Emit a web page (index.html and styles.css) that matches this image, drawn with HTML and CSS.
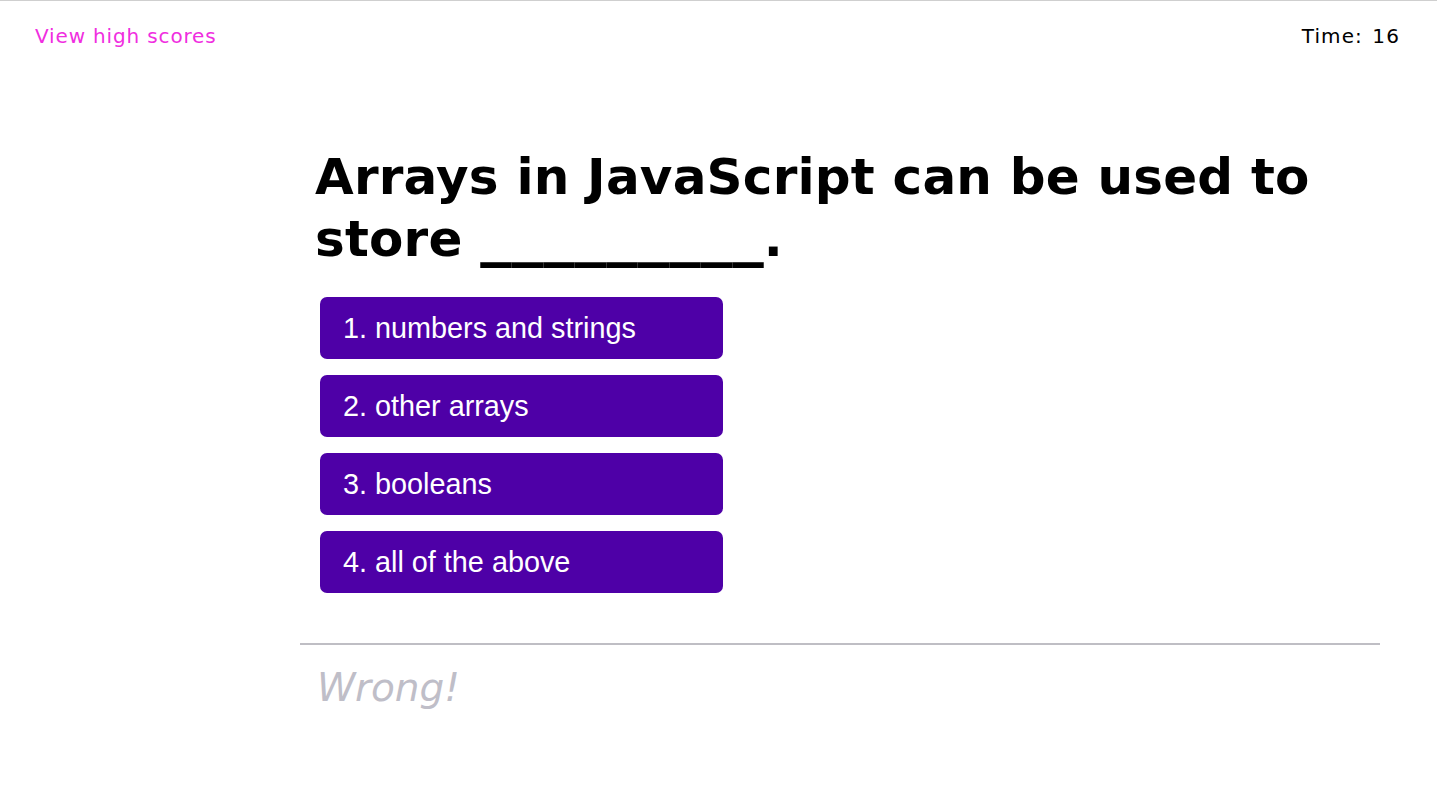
FILE: index.html
```html
<!DOCTYPE html>
<html>
<head>
<meta charset="utf-8">
<link rel="stylesheet" href="styles.css">
</head>
<body>
<header class="topbar">
  <a class="highscores" href="#">View high scores</a>
  <div class="timer">Time: <span>16</span></div>
</header>
<main class="quiz">
  <h1 class="question">Arrays in JavaScript can be used to store <span class="blank">_________</span>.</h1>
  <div class="choices">
    <button class="choice">1. numbers and strings</button>
    <button class="choice">2. other arrays</button>
    <button class="choice">3. booleans</button>
    <button class="choice">4. all of the above</button>
  </div>
  <div class="feedback">
    <p class="result">Wrong!</p>
  </div>
</main>
</body>
</html>
```
FILE: styles.css
```css
html, body {
  margin: 0;
  padding: 0;
  background: #fff;
}
body {
  font-family: Verdana, "DejaVu Sans", sans-serif;
  border-top: 1px solid #cfcfcf;
}
.topbar {
  display: flex;
  justify-content: space-between;
  align-items: baseline;
  padding: 21px 37px 0 35px;
  font-size: 20px;
  line-height: 28px;
}
.highscores {
  color: #f02ee0;
  text-decoration: none;
  letter-spacing: 0.85px;
}
.timer {
  color: #000;
  letter-spacing: 1.1px;
  word-spacing: 2px;
}
.quiz {
  width: 1080px;
  margin: 0 0 0 300px;
  padding-top: 96px;
}
.question {
  margin: 0;
  padding: 0 15px;
  font-size: 50px;
  line-height: 62px;
  font-weight: bold;
  color: #000;
  letter-spacing: 0.2px;
}
.blank {
  font-size: 63px;
  line-height: 0;
  letter-spacing: 0;
  position: relative;
  top: -3px;
}
.choices {
  display: flex;
  flex-direction: column;
  align-items: flex-start;
  gap: 16px;
  padding: 27px 20px 0;
}
.choice {
  width: 403px;
  height: 62px;
  padding: 0 23px;
  border: none;
  border-radius: 7px;
  background: #4e00a7;
  color: #fff;
  font-family: "Liberation Sans", Arial, sans-serif;
  font-size: 28.8px;
  text-align: left;
}
.feedback {
  margin-top: 50px;
  border-top: 2px solid #bfbec4;
}
.result {
  margin: 0;
  padding: 19px 17px 0;
  font-size: 39px;
  line-height: 48px;
  font-style: italic;
  color: #bfbec8;
}
```
